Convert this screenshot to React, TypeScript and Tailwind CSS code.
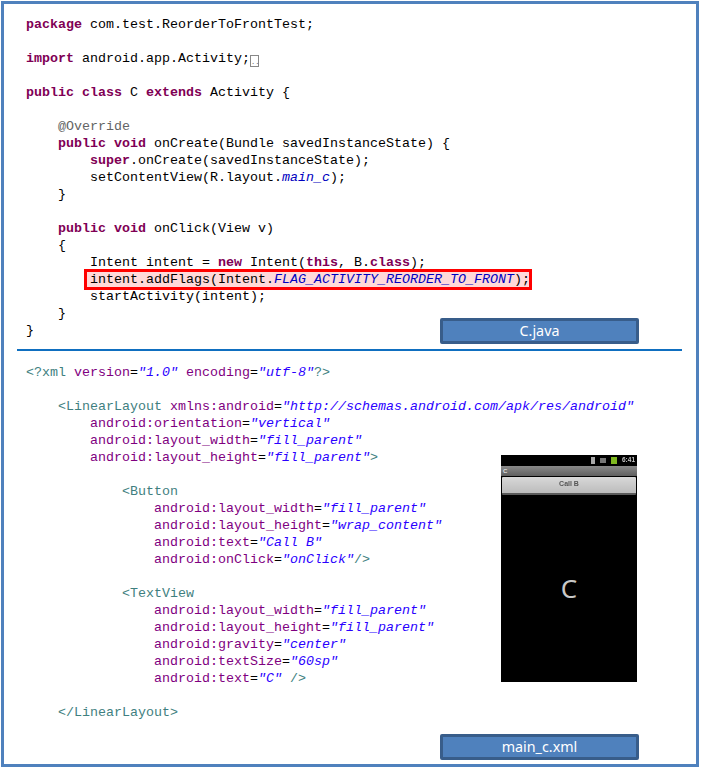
import type { ReactNode } from "react";

const K = ({ children }: { children: ReactNode }) => <span className="font-bold text-[#7f0055]">{children}</span>;
const F = ({ children }: { children: ReactNode }) => <span className="italic text-[#0000c0]">{children}</span>;
const T = ({ children }: { children: ReactNode }) => <span className="text-[#3f7f7f]">{children}</span>;
const A = ({ children }: { children: ReactNode }) => <span className="text-[#7f007f]">{children}</span>;
const S = ({ children }: { children: ReactNode }) => <span className="italic text-[#2a00ff]">{children}</span>;

function Line({ children }: { children?: ReactNode }) {
  return <div className="h-[17px] leading-[17px] whitespace-pre">{children}</div>;
}

function Attr({ name, value, end }: { name: string; value: string; end?: string }) {
  return (
    <Line>
      <A>{name}</A>=<S>{`"${value}"`}</S>
      {end && <T>{end}</T>}
    </Line>
  );
}

function FileLabel({ name }: { name: string }) {
  return (
    <div className="flex h-[26px] w-[199px] items-center justify-center rounded-[2px] border-[3px] border-[#385d8a] bg-[#4f81bd] font-['Noto_Sans'] text-[14.3px] text-white">
      {name}
    </div>
  );
}

function PhoneShot() {
  return (
    <div className="flex h-[227px] w-[136px] flex-col bg-black font-['Liberation_Sans',sans-serif]">
      <div className="flex h-[11px] items-center justify-end gap-[5px] pr-[2px] blur-[0.4px]">
        <span className="h-[7px] w-[4px] bg-[#a8a8a8]" />
        <span className="h-[5px] w-[6px] self-center bg-[#777]" />
        <span className="h-[7px] w-[6px] bg-[#7fb820]" />
        <span className="text-[6.5px] leading-none font-bold text-[#c4c4c4]">6:41</span>
      </div>
      <div className="flex h-[10px] items-center bg-gradient-to-b from-[#8a8a8a] to-[#5f5f5f] pl-[2px] text-[6px] leading-none font-bold text-[#e0e0e0]">
        C
      </div>
      <div className="mx-[1px] mt-[1px] flex h-[18px] items-center justify-center rounded-[1px] border-b-[2px] border-[#5a5a5a] bg-gradient-to-b from-[#d8d8d8] to-[#bcbcbc] text-[7px] font-bold text-[#555] blur-[0.3px]">
        Call B
      </div>
      <div className="flex flex-1 items-center justify-center font-['Noto_Sans'] text-[26px] text-[#c8c8c8]">C</div>
    </div>
  );
}

export default function App() {
  return (
    <div className="h-[768px] w-[701px] bg-white pt-[1px] pl-[1px]">
      <div className="h-[766px] w-[698px] border-[3px] border-[#4f81bd] font-['Liberation_Mono',monospace] text-[13.33px] text-black">
        <section className="grid h-[345px] pt-[11.5px] pl-[22px]">
          <div className="col-start-1 row-start-1">
            <Line><K>package</K> com.test.ReorderToFrontTest;</Line>
            <Line />
            <Line>
              <K>import</K> android.app.Activity;
              <span className="inline-block h-[12px] w-[9px] border border-[#888] align-[-2px] text-[7px] leading-[13px] text-[#666]">..</span>
            </Line>
            <Line />
            <Line><K>public</K> <K>class</K> C <K>extends</K> Activity {"{"}</Line>
            <Line />
            <Line>    <span className="text-[#646464]">@Override</span></Line>
            <Line>    <K>public</K> <K>void</K> onCreate(Bundle savedInstanceState) {"{"}</Line>
            <Line>        <K>super</K>.onCreate(savedInstanceState);</Line>
            <Line>        setContentView(R.layout.<F>main_c</F>);</Line>
            <Line>    {"}"}</Line>
            <Line />
            <Line>    <K>public</K> <K>void</K> onClick(View v)</Line>
            <Line>    {"{"}</Line>
            <Line>        Intent intent = <K>new</K> Intent(<K>this</K>, B.<K>class</K>);</Line>
            <div className="my-[-2px] ml-[58px] h-[21px] w-[448px] border-[3px] border-[#ff0000] bg-[#ffd9d9] pl-[3px] leading-[15px] whitespace-pre">
              intent.addFlags(Intent.<F>FLAG_ACTIVITY_REORDER_TO_FRONT</F>);
            </div>
            <Line>        startActivity(intent);</Line>
            <Line>    {"}"}</Line>
            <Line>{"}"}</Line>
          </div>
          <div className="col-start-1 row-start-1 mb-[5px] ml-[414px] self-end justify-self-start">
            <FileLabel name="C.java" />
          </div>
        </section>

        <hr className="ml-[13px] h-[2px] w-[665px] border-0 bg-[#0f6fc0]" />

        <section className="grid pt-[12.5px] pl-[22px]">
          <div className="col-start-1 row-start-1">
            <Line>
              <T>{"<?"}</T>
              <T>xml</T> <A>version</A>=<S>"1.0"</S> <A>encoding</A>=<S>"utf-8"</S>
              <T>{"?>"}</T>
            </Line>
            <Line />
            <Line>    <T>{"<LinearLayout"}</T> <A>xmlns:android</A>=<S>"http://schemas.android.com/apk/res/android"</S></Line>
            <div className="pl-[64px]">
              <Attr name="android:orientation" value="vertical" />
              <Attr name="android:layout_width" value="fill_parent" />
              <Attr name="android:layout_height" value="fill_parent" end=">" />
              <Line />
            </div>
            <div className="pl-[96px]">
              <Line><T>{"<Button"}</T></Line>
              <div className="pl-[32px]">
                <Attr name="android:layout_width" value="fill_parent" />
                <Attr name="android:layout_height" value="wrap_content" />
                <Attr name="android:text" value="Call B" />
                <Attr name="android:onClick" value="onClick" end="/>" />
              </div>
              <Line />
              <Line><T>{"<TextView"}</T></Line>
              <div className="pl-[32px]">
                <Attr name="android:layout_width" value="fill_parent" />
                <Attr name="android:layout_height" value="fill_parent" />
                <Attr name="android:gravity" value="center" />
                <Attr name="android:textSize" value="60sp" />
                <Attr name="android:text" value="C" end=" />" />
              </div>
            </div>
            <Line />
            <Line>    <T>{"</LinearLayout>"}</T></Line>
          </div>
          <div className="col-start-1 row-start-1 mt-[91px] ml-[475px] self-start justify-self-start">
            <PhoneShot />
          </div>
          <div className="col-start-1 ml-[414px] mt-[13px]">
            <FileLabel name="main_c.xml" />
          </div>
        </section>
      </div>
    </div>
  );
}
